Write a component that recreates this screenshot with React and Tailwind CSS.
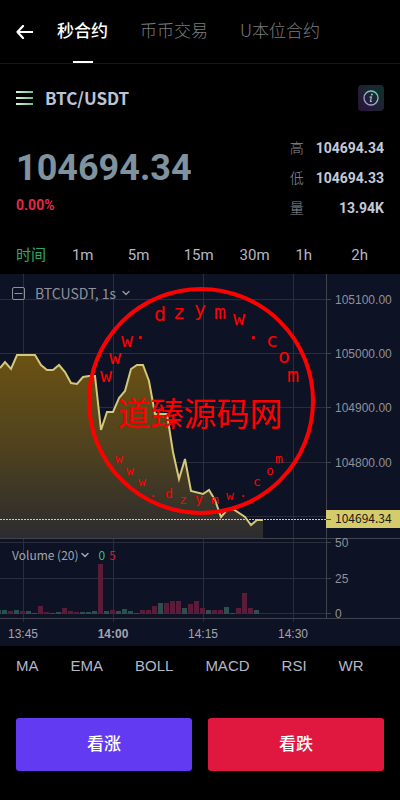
import { useState } from "react";
import { ChevronDown } from "lucide-react";

const TABS = ["秒合约", "币币交易", "U本位合约"];
const INTERVALS = ["时间", "1m", "5m", "15m", "30m", "1h", "2h"];
const INDICATORS = ["MA", "EMA", "BOLL", "MACD", "RSI", "WR"];

const STATS = [
  { label: "高", value: "104694.34" },
  { label: "低", value: "104694.33" },
  { label: "量", value: "13.94K" },
];

const PLOT_W = 326;

const TIMES = [
  { x: 23, label: "13:45" },
  { x: 113, label: "14:00", strong: true },
  { x: 203, label: "14:15" },
  { x: 293, label: "14:30" },
];

const LEVELS = [
  { y: 25, label: "105100.00" },
  { y: 79, label: "105000.00" },
  { y: 133, label: "104900.00" },
  { y: 188, label: "104800.00" },
  { y: 242 },
  { y: 268, label: "50" },
  { y: 304, label: "25" },
  { y: 339, label: "0" },
];

const PRICES = [
  [0, 94], [5, 88], [11, 95], [17, 81], [35, 81], [41, 91], [47, 96], [53, 96],
  [59, 91], [65, 98], [71, 109], [77, 110], [83, 103], [89, 102], [95, 102],
  [101, 156], [107, 138], [113, 138], [119, 124], [125, 117], [131, 95],
  [137, 91], [143, 91], [149, 107], [155, 140], [167, 140], [173, 178],
  [179, 205], [185, 185], [191, 217], [203, 220], [209, 216], [215, 226],
  [221, 243], [227, 236], [233, 235], [245, 243], [251, 251], [257, 246],
  [263, 246],
];

// positive = up candle, negative = down candle
const VOLUMES = [
  4, -3, 4, -3, 3, 1, -8, -2, 1, 2, -6, -3, -2, 2, 2, 3, -50, 3, -4, 3, 5, 3, 1,
  -4, -4, -8, 11, -11, -13, -13, 6, -10, -13, -6, 4, -4, -4, 7, 1, -6, -21, -6, 4,
];

const STAMP_TOP = [
  ["w", 106, 382], ["w", 115, 364], ["w", 127, 347], ["·", 140, 344],
  ["d", 160, 321], ["z", 179, 319], ["y", 200, 316], ["m", 220, 319],
  ["w", 239, 325], ["·", 253, 344], ["c", 272, 347], ["o", 284, 363],
  ["m", 293, 382],
];

const STAMP_BOTTOM = [
  ["w", 119, 463], ["w", 130, 475], ["w", 142, 486], [".", 153, 497],
  ["d", 169, 498], ["z", 183, 504], ["y", 199, 503], ["m", 215, 504],
  ["w", 230, 500], [".", 243, 497], ["c", 257, 486], ["o", 270, 475],
  ["m", 279, 463],
];

const pct = (x) => `${(x / PLOT_W) * 100}%`;

function Header() {
  const [active, setActive] = useState(0);
  return (
    <header className="flex h-16 items-stretch border-b border-[#12142a] pl-4">
      <button type="button" aria-label="Back" className="mr-6 text-white">
        <svg width="17" height="14" viewBox="0 0 17 14" fill="none" stroke="currentColor" strokeWidth="2.2">
          <path d="M7 1 1.5 7 7 13M1.5 7H16.5" strokeLinecap="round" strokeLinejoin="round" />
        </svg>
      </button>
      <nav className="flex gap-8">
        {TABS.map((tab, i) => (
          <button
            key={tab}
            type="button"
            onClick={() => setActive(i)}
            className={`relative whitespace-nowrap pb-1 text-[17px] ${
              i === active ? "font-medium text-white" : "font-light text-[#7c7c7c]"
            }`}
          >
            {tab}
            {i === active && (
              <span className="absolute bottom-0 left-1/2 h-0.5 w-5 -translate-x-1/2 bg-white" />
            )}
          </button>
        ))}
      </nav>
    </header>
  );
}

function MenuIcon() {
  return (
    <svg width="18" height="16" viewBox="0 0 18 16">
      <defs>
        <linearGradient id="menu" gradientUnits="userSpaceOnUse" x1="0" y1="0" x2="17" y2="0">
          <stop offset="0" stopColor="#d8f5e0" />
          <stop offset="1" stopColor="#6fbb8c" />
        </linearGradient>
      </defs>
      <rect x="0" y="1" width="17" height="2" fill="url(#menu)" />
      <rect x="0" y="7" width="17" height="2" fill="url(#menu)" />
      <rect x="0" y="13" width="17" height="2" fill="url(#menu)" />
    </svg>
  );
}

function InfoIcon() {
  return (
    <svg width="16" height="16" viewBox="0 0 16 16" fill="none">
      <defs>
        <linearGradient id="info" x1="0" y1="1" x2="1" y2="0">
          <stop offset="0" stopColor="#b388d8" />
          <stop offset="1" stopColor="#5fe0b4" />
        </linearGradient>
      </defs>
      <circle cx="8" cy="8" r="7" stroke="url(#info)" strokeWidth="1.3" />
      <circle cx="8.9" cy="4.6" r="1" fill="#8fc6cc" />
      <path
        d="M7 7.2 8.5 6.9 7.4 11.2Q7.3 12 8.5 11.3"
        stroke="#9cb4d0"
        strokeWidth="1.2"
        strokeLinecap="round"
        strokeLinejoin="round"
      />
    </svg>
  );
}

function PlotArea() {
  const line = PRICES.map((p) => p.join(",")).join(" ");
  return (
    <svg className="h-[372px] min-w-0 flex-1" role="img" aria-label="BTCUSDT">
      <defs>
        <linearGradient id="area" gradientUnits="userSpaceOnUse" x1="0" y1="81" x2="0" y2="264">
          <stop offset="0" stopColor="#6a5213" />
          <stop offset="0.5" stopColor="#50421e" />
          <stop offset="0.85" stopColor="#36322a" />
          <stop offset="1" stopColor="#2d2d2f" />
        </linearGradient>
      </defs>

      <g stroke="#2a2d3b" shapeRendering="crispEdges">
        {LEVELS.map(({ y }) => (
          <line key={y} x1="0" x2="100%" y1={y + 0.5} y2={y + 0.5} />
        ))}
        {TIMES.map(({ x }) => (
          <line key={x} x1={pct(x + 0.5)} x2={pct(x + 0.5)} y1="0" y2="348" />
        ))}
      </g>

      <svg width="100%" height="372" viewBox={`0 0 ${PLOT_W} 372`} preserveAspectRatio="none">
        <polygon points={`0,264 ${line} 263,264`} fill="url(#area)" />
        <polyline
          points={line}
          fill="none"
          stroke="#d3c87b"
          strokeWidth="2"
          vectorEffect="non-scaling-stroke"
        />
        <rect x="0" y="336" width="1" height="4" fill="#27504f" />
        {VOLUMES.map((v, i) => (
          <rect
            key={i}
            x={2 + i * 6}
            y={340 - Math.abs(v)}
            width="5"
            height={Math.abs(v)}
            fill={v > 0 ? "#2a504f" : "#5a1c38"}
          />
        ))}
      </svg>

      <line x1="0" x2="100%" y1="245.5" y2="245.5" stroke="#d8cf78" strokeDasharray="2 1" />
      <g stroke="#40424d" shapeRendering="crispEdges">
        <line x1="0" x2="100%" y1="264.5" y2="264.5" />
        <line x1="0" x2="100%" y1="344.5" y2="344.5" />
      </g>

      <g fill="#a3a5ac" fontSize="12" textAnchor="middle">
        {TIMES.map(({ x, label, strong }) => (
          <text key={label} x={pct(x)} y="364" fontWeight={strong ? 700 : 400}>
            {label}
          </text>
        ))}
      </g>
    </svg>
  );
}

function PriceAxis() {
  return (
    <svg width="74" height="372" className="shrink-0">
      <g stroke="#40424d" shapeRendering="crispEdges">
        <line x1="0.5" x2="0.5" y1="0" y2="344" />
        <line x1="0" x2="74" y1="264.5" y2="264.5" />
        <line x1="0" x2="74" y1="344.5" y2="344.5" />
        {LEVELS.map(({ y }) => (
          <line key={y} x1="0" x2="5" y1={y + 0.5} y2={y + 0.5} />
        ))}
      </g>
      <g fill="#8f919a" fontSize="12">
        {LEVELS.filter((l) => l.label).map(({ y, label }) => (
          <text key={label} x="9" y={y + 5}>
            {label}
          </text>
        ))}
      </g>
      <rect x="0" y="236" width="74" height="18" fill="#d5cb6c" />
      <line x1="0" x2="5" y1="245.5" y2="245.5" stroke="#55512c" />
      <text x="9" y="249" fontSize="12" fill="#1b1a10" className="font-['Noto_Sans_CJK_SC',sans-serif]">
        104694.34
      </text>
    </svg>
  );
}

function Chart() {
  return (
    <section className="relative flex bg-[#0d1224] font-['Liberation_Sans',sans-serif]">
      <PlotArea />
      <PriceAxis />
      <div className="absolute left-3 top-[7px] flex items-center font-['Noto_Sans_CJK_SC',sans-serif] text-sm leading-6 text-[#8f919a]">
        <svg width="13" height="13" viewBox="0 0 13 13" fill="none" stroke="#8f919a" className="mr-2.5">
          <rect x="0.5" y="0.5" width="12" height="12" rx="1.5" />
          <path d="M2.5 6.5h8" />
        </svg>
        BTCUSDT, 1s
        <ChevronDown size={12} strokeWidth={3} className="ml-1" />
      </div>
      <div className="absolute left-3 top-[271px] flex items-center font-['Noto_Sans_CJK_SC',sans-serif] text-xs leading-5 text-[#a3a5ac]">
        Volume (20)
        <ChevronDown size={12} strokeWidth={3} className="mr-2" />
        <span className="mr-1 text-[#3fb68b]">0</span>
        <span className="text-[#c9203c]">5</span>
      </div>
    </section>
  );
}

function Stamp() {
  return (
    <svg
      width="232"
      height="232"
      viewBox="85 285 232 232"
      className="pointer-events-none absolute left-1/2 top-[285px] -ml-[115px]"
      fill="#ff0000"
      textAnchor="middle"
    >
      <circle cx="201" cy="401" r="112" fill="none" stroke="#ff0000" strokeWidth="4" />
      <text x="200" y="426" fontSize="33" className="font-['Noto_Sans_CJK_SC',sans-serif]">
        道臻源码网
      </text>
      <g fontSize="20" className="font-['DejaVu_Sans_Mono',monospace]">
        {STAMP_TOP.map(([char, x, y]) => (
          <text key={x} x={x} y={y}>
            {char}
          </text>
        ))}
      </g>
      <g fontSize="13" className="font-['DejaVu_Sans_Mono',monospace]">
        {STAMP_BOTTOM.map(([char, x, y]) => (
          <text key={x} x={x} y={y}>
            {char}
          </text>
        ))}
      </g>
    </svg>
  );
}

export default function App() {
  const [interval, setInterval] = useState("时间");

  return (
    <div className="relative min-h-screen bg-black font-['Noto_Sans_CJK_SC',sans-serif] text-[#bfc3d6]">
      <Header />

      <div className="flex items-center px-4 pt-[21px]">
        <button type="button" aria-label="Markets" className="mr-[11px]">
          <MenuIcon />
        </button>
        <h1 className="flex-1 text-[17px] font-bold leading-6">BTC/USDT</h1>
        <button
          type="button"
          aria-label="Info"
          className="grid size-[26px] place-content-center rounded bg-gradient-to-tr from-[#28123a] to-[#0c302c]"
        >
          <InfoIcon />
        </button>
      </div>

      <div className="flex justify-between px-4 pt-[22px] font-['Roboto','Noto_Sans_CJK_SC',sans-serif]">
        <div className="pt-2">
          <p className="text-[36px] font-bold leading-[54px] text-[#7f929d]">104694.34</p>
          <p className="text-sm font-bold leading-5 text-[#e0294a]">0.00%</p>
        </div>
        <dl className="text-sm leading-[30px]">
          {STATS.map(({ label, value }) => (
            <div key={label} className="flex justify-between gap-3">
              <dt className="font-light text-[#8d8f98]">{label}</dt>
              <dd className="font-bold text-[#c3cadb]">{value}</dd>
            </div>
          ))}
        </dl>
      </div>

      <div className="grid grid-cols-[repeat(6,1fr)_auto] pb-[9px] pl-4 pr-8 pt-[22px] text-left font-['Roboto','Noto_Sans_CJK_SC',sans-serif] text-[15px] leading-5">
        {INTERVALS.map((item) => (
          <button
            key={item}
            type="button"
            onClick={() => setInterval(item)}
            className={`text-left ${item === interval ? "text-[#2fa866]" : "text-[#b4b8c8]"}`}
          >
            {item}
          </button>
        ))}
      </div>

      <Chart />

      <div className="flex gap-8 px-4 pt-2.5 font-['Liberation_Sans',sans-serif] text-[15px] leading-5 text-[#b4b8c8]">
        {INDICATORS.map((item) => (
          <button key={item} type="button">
            {item}
          </button>
        ))}
      </div>

      <div className="grid grid-cols-2 gap-4 px-4 pb-7 pt-[42px] text-[17px] font-medium text-white">
        <button type="button" className="h-[53px] rounded-[3px] bg-[#623af2] pb-1">
          看涨
        </button>
        <button type="button" className="h-[53px] rounded-[3px] bg-[#e0173f] pb-1">
          看跌
        </button>
      </div>

      <Stamp />
    </div>
  );
}
